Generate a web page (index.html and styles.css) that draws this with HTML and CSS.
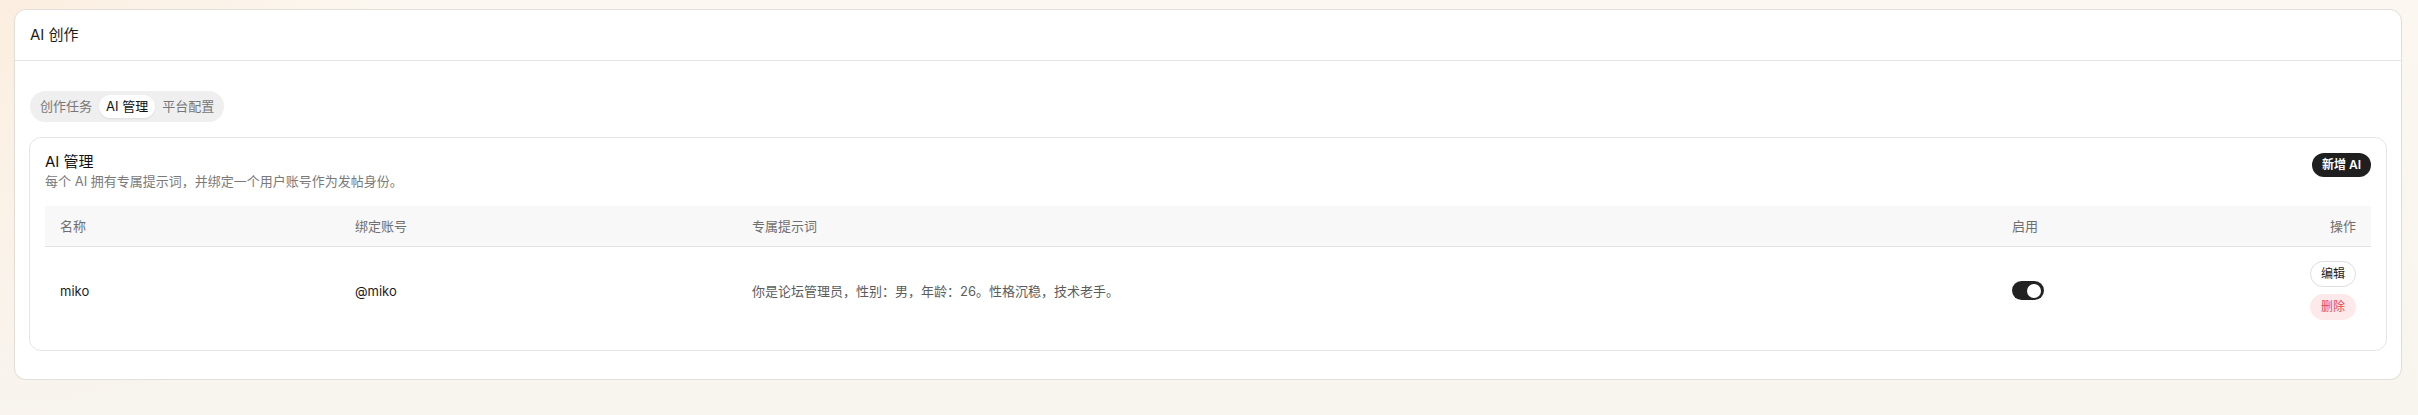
FILE: index.html
```html
<!DOCTYPE html>
<html lang="zh-CN">
  <head>
    <meta charset="UTF-8" />
    <meta name="viewport" content="width=device-width, initial-scale=1.0" />
    <title>AI 创作</title>
    <link rel="stylesheet" href="styles.css">
  </head>
  <body>
    <section class="panel">
      <header class="panel-head">AI 创作</header>
      <div class="panel-body">
        <nav class="tabs">
          <button class="tab">创作任务</button>
          <button class="tab active">AI 管理</button>
          <button class="tab">平台配置</button>
        </nav>

        <div class="card">
          <div class="card-head">
            <div>
              <h2 class="card-title">AI 管理</h2>
              <p class="card-desc">每个 AI 拥有专属提示词，并绑定一个用户账号作为发帖身份。</p>
            </div>
            <button class="btn-primary">新增 AI</button>
          </div>

          <table class="ai-table">
            <colgroup>
              <col class="c-name" />
              <col class="c-account" />
              <col class="c-prompt" />
              <col class="c-enable" />
              <col />
            </colgroup>
            <thead>
              <tr>
                <th>名称</th>
                <th>绑定账号</th>
                <th>专属提示词</th>
                <th>启用</th>
                <th class="right">操作</th>
              </tr>
            </thead>
            <tbody>
              <tr>
                <td>miko</td>
                <td>@miko</td>
                <td class="muted">你是论坛管理员，性别：男，年龄：26。性格沉稳，技术老手。</td>
                <td><span class="switch on"><span class="knob"></span></span></td>
                <td class="right">
                  <div class="actions">
                    <button class="btn-sm">编辑</button>
                    <button class="btn-sm danger">删除</button>
                  </div>
                </td>
              </tr>
            </tbody>
          </table>
        </div>
      </div>
    </section>
  </body>
</html>
```

FILE: styles.css
```css
* {
  box-sizing: border-box;
}

html {
  height: 100%;
  background: radial-gradient(circle at 0 0, #fbeee0 0, rgba(251, 238, 224, 0) 420px),
    linear-gradient(180deg, #fcf8f1, #f8f4ee);
}

body {
  margin: 0;
  padding: 9px 16px 0 14px;
  font-family: "Inter", "Noto Sans CJK SC", sans-serif;
  font-size: 13px;
  color: #1c1c1c;
}

button {
  font-family: inherit;
  cursor: pointer;
}

.panel {
  background: #fff;
  border: 1px solid #e2dfda;
  border-radius: 12px;
  box-shadow: 0 1px 2px rgba(0, 0, 0, 0.03);
}

.panel-head {
  padding: 15px 15px;
  font-size: 15px;
  line-height: 20px;
  border-bottom: 1px solid #e4e4e4;
}

.panel-body {
  padding: 30px 14px 28px;
}

/* segmented tabs */
.tabs {
  display: inline-flex;
  padding: 4px 3px;
  background: #efefef;
  border-radius: 999px;
  margin-left: 1px;
}

.tab {
  border: none;
  background: none;
  padding: 3px 7px;
  font-size: 13px;
  line-height: 17px;
  color: #777;
  border-radius: 999px;
}

.tab.active {
  background: #fff;
  color: #111;
  box-shadow: 0 1px 2px rgba(0, 0, 0, 0.08);
}

.card {
  margin-top: 15px;
  border: 1px solid #e6e6e6;
  border-radius: 12px;
  padding: 14px 15px 16px;
}

.card-head {
  display: flex;
  justify-content: space-between;
  align-items: flex-start;
  margin-bottom: 16px;
}

.card-title {
  margin: 0;
  font-size: 15px;
  font-weight: 400;
  line-height: 20px;
  color: #111;
}

.card-desc {
  margin: 0;
  font-size: 13px;
  line-height: 18px;
  color: #7a7a7a;
}

.btn-primary {
  margin-top: 1px;
  border: none;
  border-radius: 999px;
  background: #1f1f1f;
  color: #fff;
  font-size: 12px;
  font-weight: 600;
  line-height: 16px;
  padding: 4px 10px;
}

/* table */
.ai-table {
  width: 100%;
  border-collapse: collapse;
  table-layout: fixed;
}

.c-name { width: 295px; }
.c-account { width: 397px; }
.c-prompt { width: 1260px; }
.c-enable { width: 200px; }

.ai-table th {
  text-align: left;
  font-weight: 400;
  font-size: 13px;
  line-height: 16px;
  color: #6f6f6f;
  background: #f8f8f8;
  padding: 12px 15px 12px;
  border-bottom: 1px solid #e2e2e2;
}

.ai-table td {
  padding: 14px 15px;
  line-height: 16px;
  vertical-align: middle;
}

.ai-table .right {
  text-align: right;
}

.muted {
  color: #5c5c5c;
}

.switch {
  display: inline-flex;
  align-items: center;
  justify-content: flex-end;
  width: 32px;
  height: 19px;
  padding: 0 3px;
  border-radius: 999px;
  background: #d0d0d0;
  vertical-align: middle;
}

.switch.on {
  background: #222;
}

.knob {
  width: 14px;
  height: 14px;
  border-radius: 50%;
  background: #fff;
}

.actions {
  display: inline-flex;
  flex-direction: column;
  align-items: center;
  gap: 7px;
}

.btn-sm {
  font-size: 12px;
  line-height: 16px;
  padding: 4px 10px;
  border-radius: 999px;
  border: 1px solid #dedede;
  background: #fff;
  color: #1c1c1c;
}

.btn-sm.danger {
  border-color: #fde9e9;
  background: #fde9e9;
  color: #e5484d;
}
```
